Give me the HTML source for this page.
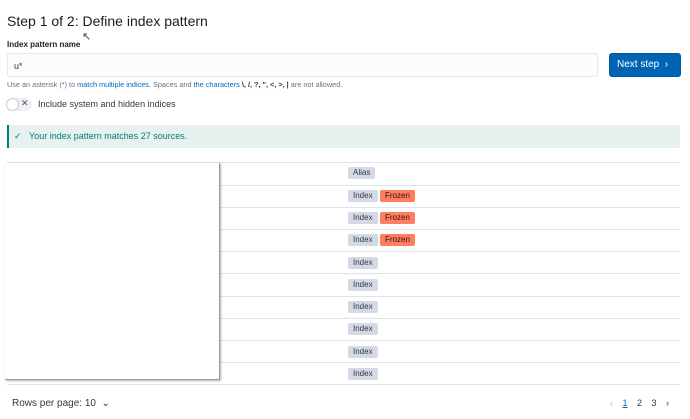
<!DOCTYPE html>
<html><head><style>
*{box-sizing:border-box;margin:0;padding:0}
body{width:690px;height:419px;background:#fff;font-family:"Liberation Sans",sans-serif;color:#343741;position:relative;overflow:hidden}
.a{position:absolute}
.badge{position:absolute;font-size:8px;line-height:12px;height:12px;padding:0 5px;background:#d3dae6;color:#343741;border-radius:2px}
.fz{background:#ff7e62;color:#3a0d05}
.line{position:absolute;left:7px;width:673px;height:1px;background:#dfe3ea}
</style></head><body>
<div class="a" style="left:7px;top:13px;font-size:14px;color:#1a1c21">Step 1 of 2: Define index pattern</div>
<div class="a" style="left:82px;top:30px;font-size:11px;color:#444">↖</div>
<div class="a" style="left:7px;top:40px;font-size:8px;font-weight:bold;color:#1a1c21">Index pattern name</div>
<div class="a" style="left:7px;top:53px;width:591px;height:24px;background:#fbfcfd;border:1px solid #e4e8ef;border-radius:2px;font-size:9px;padding:7px 6px;color:#343741">u*</div>
<div class="a" style="left:609px;top:53px;width:72px;height:24px;background:#0064b4;border:1px solid #005a9e;border-radius:3px;color:#fff;font-size:10px;line-height:22px;padding-left:7px">Next step &nbsp;›</div>
<div class="a" style="left:7px;top:80px;font-size:7.3px;color:#69707d">Use an asterisk (*) to <span style="color:#006bb8">match multiple indices</span>. Spaces and <span style="color:#006bb8">the characters</span> <b style="color:#343741">\, /, ?, ", &lt;, &gt;, |</b> are not allowed.</div>
<div class="a" style="left:6px;top:98px;width:26px;height:13px;border-radius:7px;background:#eef0f3"></div>
<div class="a" style="left:6px;top:98px;width:13px;height:13px;border-radius:50%;background:#fff;border:1px solid #c6ccd5"></div>
<div class="a" style="left:21px;top:98px;font-size:9px;color:#555">✕</div>
<div class="a" style="left:38px;top:99px;font-size:9px;color:#343741">Include system and hidden indices</div>
<div class="a" style="left:7px;top:125px;width:673px;height:23px;background:#e6f1f0;border-left:2px solid #017d73"></div>
<div class="a" style="left:14px;top:131px;font-size:9px;color:#017d73">✓ &nbsp;&nbsp;Your index pattern matches 27 sources.</div>
<div class="line" style="top:162px"></div><div class="line" style="top:185px"></div><div class="line" style="top:207px"></div><div class="line" style="top:229px"></div><div class="line" style="top:251px"></div><div class="line" style="top:273px"></div><div class="line" style="top:296px"></div><div class="line" style="top:318px"></div><div class="line" style="top:340px"></div><div class="line" style="top:362px"></div><div class="line" style="top:384px"></div>
<div class="badge" style="left:348px;top:167px">Alias</div>
<div class="badge" style="left:348px;top:190px">Index</div><div class="badge fz" style="left:380px;top:190px">Frozen</div>
<div class="badge" style="left:348px;top:212px">Index</div><div class="badge fz" style="left:380px;top:212px">Frozen</div>
<div class="badge" style="left:348px;top:234px">Index</div><div class="badge fz" style="left:380px;top:234px">Frozen</div>
<div class="badge" style="left:348px;top:257px">Index</div>
<div class="badge" style="left:348px;top:279px">Index</div>
<div class="badge" style="left:348px;top:301px">Index</div>
<div class="badge" style="left:348px;top:323px">Index</div>
<div class="badge" style="left:348px;top:346px">Index</div>
<div class="badge" style="left:348px;top:368px">Index</div>
<div class="a" style="left:5px;top:163px;width:215px;height:217px;background:#fff;border-right:1px solid #999;border-bottom:1px solid #999;box-shadow:1px 1px 2px rgba(0,0,0,.3)"></div>
<div class="a" style="left:12px;top:398px;font-size:10px;color:#343741">Rows per page: 10 &nbsp;⌄</div>
<div class="a" style="left:610px;top:398px;font-size:9px;color:#343741;word-spacing:7px"><span style="color:#bbb">‹</span> <u style="color:#006bb8">1</u> 2 3 ›</div>
</body></html>
